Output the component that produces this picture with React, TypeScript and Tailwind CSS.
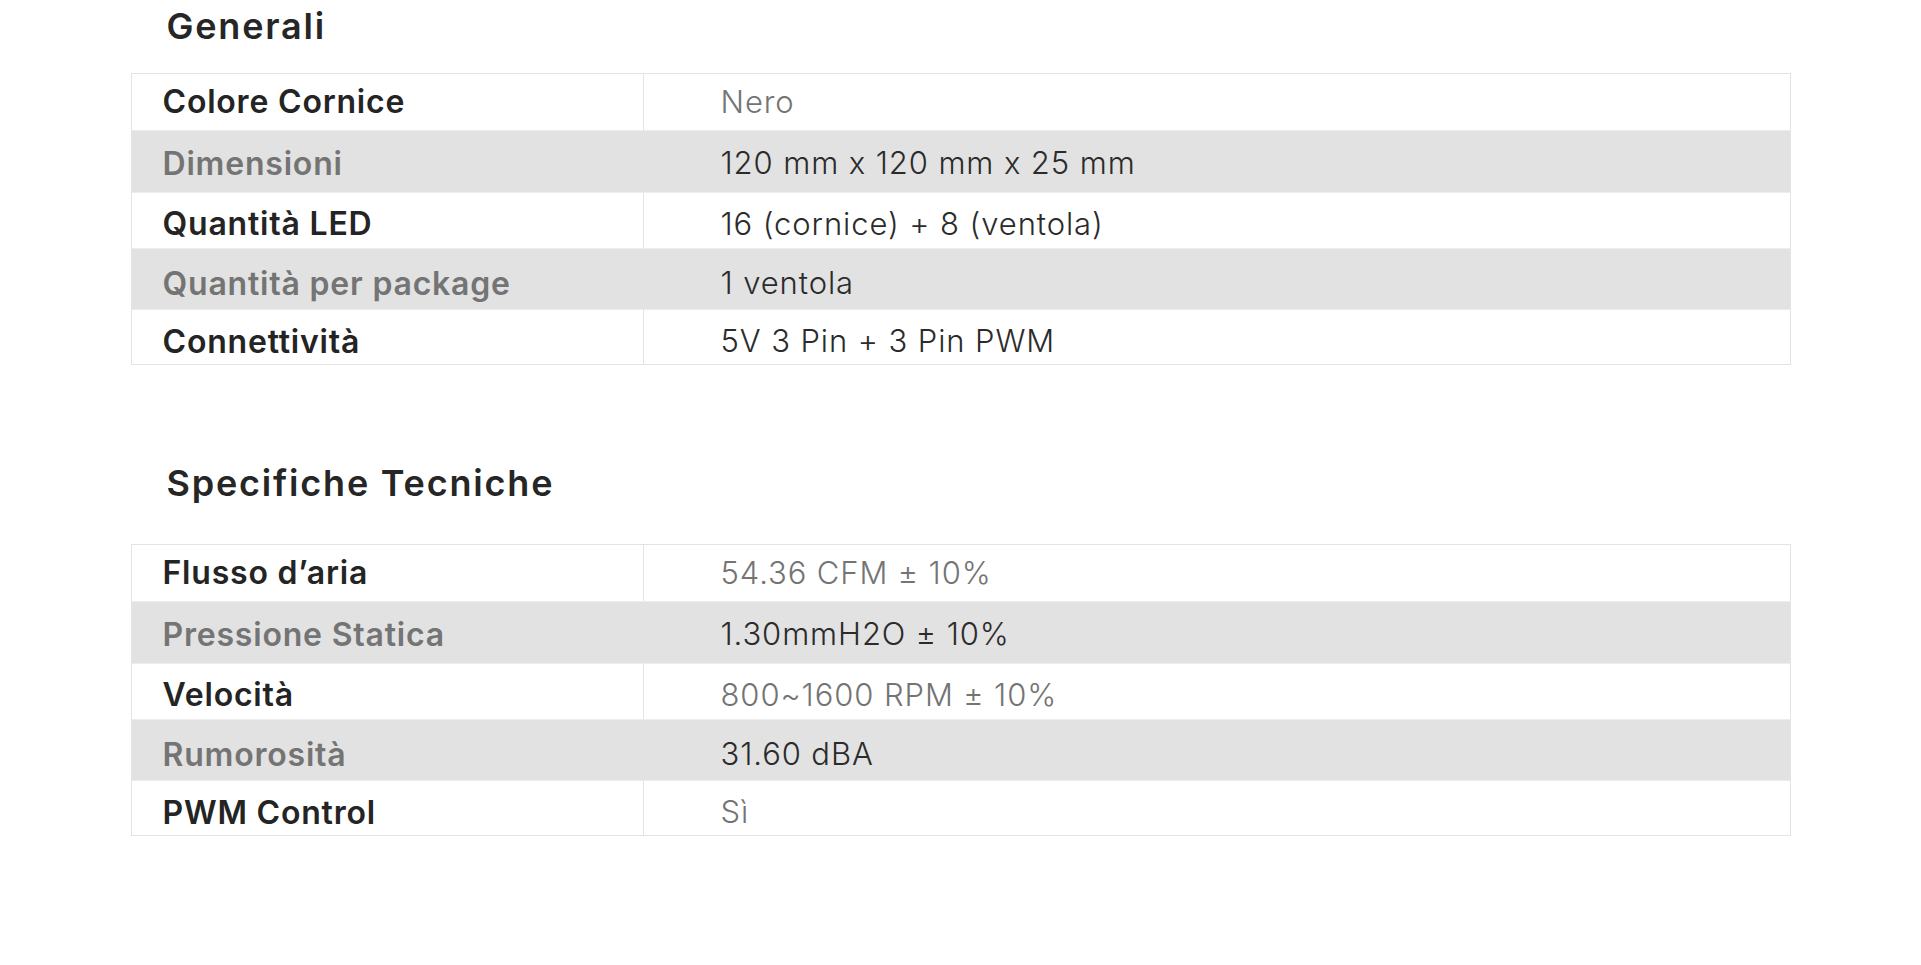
import React from "react";

type Row = { label: string; value: string; valueMuted?: boolean };

const generali: Row[] = [
  { label: "Colore Cornice", value: "Nero", valueMuted: true },
  { label: "Dimensioni", value: "120 mm x 120 mm x 25 mm" },
  { label: "Quantità LED", value: "16 (cornice) + 8 (ventola)" },
  { label: "Quantità per package", value: "1 ventola" },
  { label: "Connettività", value: "5V 3 Pin + 3 Pin PWM" },
];

const tecniche: Row[] = [
  { label: "Flusso d’aria", value: "54.36 CFM ± 10%", valueMuted: true },
  { label: "Pressione Statica", value: "1.30mmH2O ± 10%" },
  { label: "Velocità", value: "800~1600 RPM ± 10%", valueMuted: true },
  { label: "Rumorosità", value: "31.60 dBA" },
  { label: "PWM Control", value: "Sì", valueMuted: true },
];

const rowHeights = ["h-[56px]", "h-[62px]", "h-[56px]", "h-[61px]", "h-[55px]"];
const cellPads = ["pt-0", "pt-[4px]", "pt-[7px]", "pt-[9px]", "pt-[9px]"];

function SpecTable({ rows }: { rows: Row[] }) {
  return (
    <div className="border border-[#e3e3e3] bg-white">
      {rows.map((r, i) => {
        const gray = i % 2 === 1;
        return (
          <div
            key={r.label}
            className={`flex ${rowHeights[i]} ${gray ? "bg-[#e2e2e2]" : "bg-white"} ${i > 0 ? "border-t border-[#ededed]" : ""}`}
          >
            <div
              className={`flex w-[512px] shrink-0 items-center border-r border-[#e3e3e3] pl-[31px] ${cellPads[i]}`}
            >
              <span
                className={`text-[32px] font-semibold tracking-[0.8px] ${gray ? "text-[#747474]" : "text-[#242424]"}`}
              >
                {r.label}
              </span>
            </div>
            <div className={`flex flex-1 items-center pl-[77px] ${cellPads[i]}`}>
              <span
                className={`text-[31px] font-light tracking-[0.9px] ${r.valueMuted && !gray ? "text-[#747474]" : "text-[#2b2b2b]"}`}
              >
                {r.value}
              </span>
            </div>
          </div>
        );
      })}
    </div>
  );
}

export default function App() {
  return (
    <div
      className="min-h-[965px] w-full bg-white"
      style={{ fontFamily: "Inter, 'Noto Sans', sans-serif" }}
    >
      <div className="mx-auto w-[1660px]">
        <h2 className="pl-[36px] pt-[6px] pb-[27px] text-[36px] font-semibold leading-[40px] tracking-[1.8px] text-[#262626]">
          Generali
        </h2>
        <SpecTable rows={generali} />
        <h2 className="pl-[36px] pt-[98px] pb-[41px] text-[36px] font-semibold leading-[40px] tracking-[1.8px] text-[#262626]">
          Specifiche Tecniche
        </h2>
        <SpecTable rows={tecniche} />
      </div>
    </div>
  );
}
